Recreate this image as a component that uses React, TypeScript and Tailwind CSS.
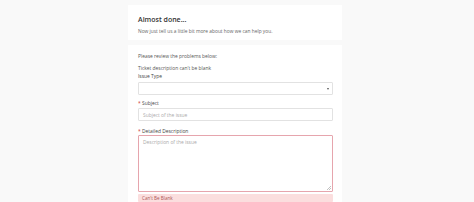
import React from "react";

export default function App() {
  return (
    <div
      className="min-h-[202px] w-full bg-[#f9f9f9] pt-[5px] text-[#555]"
      style={{ fontFamily: '"Open Sans", "Liberation Sans", sans-serif' }}
    >
      <div className="ml-[128px] w-[214px]">
        <div className="h-[35px] bg-white px-[10px] pt-[10px]">
          <h1 className="text-[7px] leading-[9px] font-semibold text-[#333]">Almost done...</h1>
          <p className="mt-[4px] text-[4.85px] leading-[6px] text-[#666]">
            Now just tell us a little bit more about how we can help you.
          </p>
        </div>

        <form className="mt-[5px] bg-white pl-[10px] pr-[9px] pt-[8px]">
          <p className="text-[4.9px] leading-[6px] text-[#555]">Please review the problems below:</p>
          <p className="mt-[6px] text-[4.9px] leading-[6px] text-[#555]">Ticket description can't be blank</p>

          <label className="mt-[2px] block text-[4.9px] leading-[6px] text-[#444]">Issue Type</label>
          <div className="mt-[3px] flex h-[13px] items-center justify-end rounded-[1px] border border-[#e2e2e2] bg-white pr-[3px]">
            <span className="block h-0 w-0 border-x-[1.5px] border-t-[2px] border-x-transparent border-t-[#555]" />
          </div>

          <label className="mt-[5px] block text-[4.9px] leading-[6px] text-[#444]">
            <span className="text-[#c33]">*</span> Subject
          </label>
          <div className="mt-[2px] flex h-[13px] items-center rounded-[1px] border border-[#e2e2e2] bg-white px-[4px]">
            <span className="text-[4.9px] leading-[6px] text-[#aaa]">Subject of the issue</span>
          </div>

          <label className="mt-[7px] block text-[4.9px] leading-[6px] text-[#444]">
            <span className="text-[#c33]">*</span> Detailed Description
          </label>
          <div className="relative mt-[1px] h-[57px] rounded-[1px] border border-[#e6a5ad] bg-white px-[4px] pt-[3px] leading-[6px]">
            <span className="block text-[4.9px] leading-[6px] text-[#aaa]">Description of the issue</span>
            <svg className="absolute right-[1px] bottom-[1px]" width="4" height="4" viewBox="0 0 4 4">
              <path d="M4 0L0 4M4 2L2 4" stroke="#999" strokeWidth="0.6" />
            </svg>
          </div>
          <div className="mt-[2px] flex h-[8px] items-center rounded-[1px] bg-[#fbdede] px-[4px]">
            <span className="text-[4.6px] leading-[6px] text-[#a55]">Can't Be Blank</span>
          </div>
        </form>
      </div>
    </div>
  );
}
